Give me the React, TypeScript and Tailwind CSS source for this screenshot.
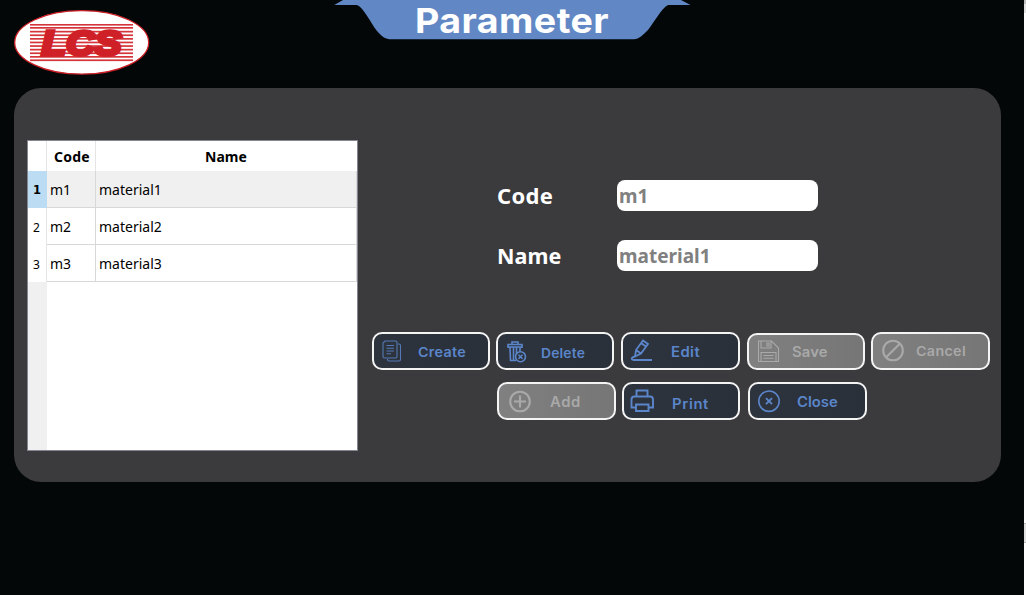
import type { ReactNode } from "react";

const rows = [
  { id: 1, code: "m1", name: "material1" },
  { id: 2, code: "m2", name: "material2" },
  { id: 3, code: "m3", name: "material3" },
];

function Logo() {
  const stripes = [27.8, 31.6, 35.2, 38.8, 42.4, 46, 49.6, 53.2, 56.8, 60.2];
  return (
    <svg className="ml-[14px] mt-[10px] h-[65px] w-[136px] shrink-0" viewBox="14 10 136 65">
      <ellipse cx="81.7" cy="42.4" rx="67" ry="31.7" fill="#fff" stroke="#cf2027" strokeWidth="1.3" />
      <g fill="#d5343a">
        <rect x="30" y="24" width="103" height="1.6" />
        {stripes.map((y) => (
          <rect key={y} x="30" y={y - 0.8} width="103" height="1.7" />
        ))}
      </g>
      <text
        x="41.5"
        y="54.6"
        fontFamily="Liberation Sans"
        fontWeight="700"
        fontStyle="italic"
        fontSize="35"
        textLength="80"
        lengthAdjust="spacingAndGlyphs"
        fill="#cf2027"
        stroke="#cf2027"
        strokeWidth="3.6"
      >
        LCS
      </text>
    </svg>
  );
}

function TitleBanner() {
  return (
    <div className="relative h-[40px] w-[357px] shrink-0">
      <svg className="absolute inset-0 h-full w-full" viewBox="334 0 357 40">
        <path
          d="M343 0 L334.3 5 H357 C364 8 370 22 377 31 C382 37 386 39.3 391 39.3 H634 C639 39 643 35 648 30 C655 21 661 9 668 5 H690.5 L681 0 Z"
          fill="#6188c5"
        />
      </svg>
      <h1 className="relative ml-[81px] mt-[-1px] origin-left scale-x-[1.09] whitespace-nowrap font-['Inter',sans-serif] text-[34.5px] font-bold leading-[43px] tracking-[0.4px] text-white">
        Parameter
      </h1>
    </div>
  );
}

function MaterialTable() {
  return (
    <div className="flex h-[311px] w-[331px] shrink-0 flex-col border border-[#828790] bg-white font-['Noto_Sans',sans-serif] text-[14px] text-black">
      <div className="flex h-[30px] shrink-0 font-bold leading-[31px]">
        <div className="w-[19px] border-r border-[#e5e5e5]" />
        <div className="w-[49px] border-r border-[#e5e5e5] pl-[7px] tracking-[0.2px]">Code</div>
        <div className="flex-1 pr-[1px] text-center tracking-[0.1px]">Name</div>
      </div>
      {rows.map((row) => (
        <div key={row.id} className="flex h-[37px] shrink-0 leading-[38px]">
          <div
            className={
              row.id === 1
                ? "w-[19px] bg-[#bcdcf4] pr-[1px] text-center font-['DejaVu_Sans',sans-serif] text-[11.5px] font-bold leading-[39px]"
                : "w-[19px] border-r border-[#e5e5e5] pr-[1px] text-center text-[12px] leading-[39px]"
            }
          >
            {row.id}
          </div>
          <div className={`h-full w-[49px] border-b border-r border-[#d8d8d8] pl-[3px] ${row.id === 1 ? "bg-[#f0f0f0]" : ""}`}>
            {row.code}
          </div>
          <div className={`h-full flex-1 border-b border-r border-[#d8d8d8] pl-[3px] ${row.id === 1 ? "bg-[#f0f0f0]" : ""}`}>
            {row.name}
          </div>
        </div>
      ))}
      <div className="w-[19px] flex-1 bg-[#f0f0f0]" />
    </div>
  );
}

function Field({ label, value, labelClass }: { label: string; value: string; labelClass: string }) {
  return (
    <label className="flex h-[31px] items-center">
      <span
        className={`w-[120px] font-['Noto_Sans',sans-serif] font-bold leading-[31px] text-white ${labelClass}`}
      >
        {label}
      </span>
      <input
        readOnly
        value={value}
        className="h-[31px] w-[201px] rounded-[8px] bg-white pl-[2px] font-['Noto_Sans',sans-serif] text-[19px] font-bold text-[#808080] outline-none"
      />
    </label>
  );
}

type ButtonProps = { label: string; textClass: string; className?: string; disabled?: boolean; children: ReactNode };

function ActionButton({ label, textClass, className = "", disabled = false, children }: ButtonProps) {
  const tone = disabled
    ? "bg-linear-to-r from-[#808080] to-[#767676] text-[#a9a9a9]"
    : "bg-linear-to-r from-[#2e343d] to-[#29303a] text-[#5b86cb]";
  return (
    <button
      disabled={disabled}
      className={`flex shrink-0 items-start rounded-[10px] border-2 border-[#f4f4f4] text-left font-['Inter',sans-serif] font-semibold ${tone} ${className}`}
    >
      <svg className="h-[34px] w-[36px] shrink-0" viewBox="0 0 36 34" fill="none" stroke="currentColor" strokeWidth="1.6">
        {children}
      </svg>
      <span className={`origin-left scale-x-[1.06] whitespace-nowrap ${textClass}`}>{label}</span>
    </button>
  );
}

export default function App() {
  return (
    <div className="flex h-[595px] w-[1026px] overflow-hidden bg-[#030708]">
      <main className="flex w-[1024px] flex-col">
        <header className="flex h-[88px] shrink-0 items-start">
          <Logo />
          <div className="w-[184px] shrink-0" />
          <TitleBanner />
        </header>
        <section className="ml-[14px] flex h-[394px] w-[987px] shrink-0 rounded-[27px] bg-[#3b3a3c] pl-[13px] pt-[52px]">
          <MaterialTable />
          <div className="ml-[14px] w-[618px] shrink-0">
            <div className="flex flex-col gap-[29px] pl-[125px] pt-[40px]">
              <Field label="Code" value="m1" labelClass="text-[22px] tracking-[0.3px]" />
              <Field label="Name" value="material1" labelClass="text-[21.5px] tracking-[0.1px]" />
            </div>
            <div className="mt-[61px] flex items-start">
              <ActionButton label="Create" className="h-[38px] w-[118px]" textClass="ml-[8px] text-[13.5px] leading-[36px] tracking-[0.3px]">
                <g strokeWidth="1.1" opacity="0.85">
                  <path d="M11 7 H21.5 Q23 7 23 8.5 V22.5 Q23 24 21.5 24 H10.5 Q9 24 9 22.5 V9 Z M24 10 H25 Q26.5 10 26.5 11.5 V25.5 Q26.5 27 25 27 H15 Q13.5 27 13.5 25.5 V25" />
                  <path d="M12.5 11.5 H20 M12.5 14.2 H20 M12.5 17 H20 M12.5 19.7 H17" />
                </g>
              </ActionButton>
              <ActionButton label="Delete" className="ml-[6px] h-[38px] w-[118px]" textClass="ml-[7px] text-[13px] leading-[38px] tracking-[0.2px]">
                <path d="M10 14 V10.5 H24 V14 M14 10 V8 H20 V10 M9.5 13 H24.5 M12 13.5 L12.5 26.5 H18 M22 13.5 V18 M15.5 13.5 V26 M18.5 13.5 V20" />
                <circle cx="22.5" cy="22.7" r="5" />
                <path d="M20.5 20.7 L24.5 24.7 M24.5 20.7 L20.5 24.7" />
              </ActionButton>
              <ActionButton label="Edit" className="ml-[7px] h-[38px] w-[119px]" textClass="ml-[12px] text-[14px] leading-[36px] tracking-[0.4px]">
                <path
                  d="M10 26 H29 M10 26 C7.5 25 9 23 12 22.5 L13 16 L20 6.5 L25 10 L18 19.5 L12 22.5 M13 16 L18 19.5 M18 9 L23 12.5"
                  strokeWidth="1.8"
                />
              </ActionButton>
              <ActionButton label="Save" disabled className="ml-[7px] mt-[1px] h-[37px] w-[118px]" textClass="ml-[7px] text-[14px] leading-[34px] tracking-[0.1px]">
                <g strokeWidth="1.1">
                  <path d="M9.5 6 H22.5 L29.5 13 V26.5 H9.5 Z M12 6 V13 H22 V6 M18 8 H20 V11 H18 Z M12 26.5 V17.5 H27 V26.5 M14.5 20.5 H24.5 M14.5 23.2 H24.5" />
                </g>
              </ActionButton>
              <ActionButton label="Cancel" disabled className="ml-[6px] h-[38px] w-[119px]" textClass="ml-[7px] text-[13.5px] leading-[34px] tracking-[0.3px]">
                <g strokeWidth="2.1">
                  <circle cx="20" cy="16.5" r="9.8" />
                  <path d="M13.2 23.3 L26.8 9.7" />
                </g>
              </ActionButton>
            </div>
            <div className="mt-[12px] flex items-start pl-[125px]">
              <ActionButton label="Add" disabled className="h-[38px] w-[119px]" textClass="ml-[15px] text-[14px] leading-[35px] tracking-[0.6px]">
                <g strokeWidth="2.1">
                  <circle cx="21" cy="17.5" r="9.8" />
                  <path d="M21 11.5 V23.5 M15 17.5 H27" />
                </g>
              </ActionButton>
              <ActionButton label="Print" className="ml-[6px] h-[38px] w-[118px]" textClass="ml-[12px] text-[14px] leading-[39px] tracking-[0.6px]">
                <g strokeWidth="1.9">
                  <path d="M12.5 12.5 V6.5 H23.5 V12.5 M11.5 23.5 H7.5 V15.5 Q7.5 12.5 10.5 12.5 H26 Q29 12.5 29 15.5 V23.5 H25 M12 20.5 H24.5 V27 H12 Z" />
                </g>
              </ActionButton>
              <ActionButton label="Close" className="ml-[8px] h-[38px] w-[119px]" textClass="ml-[11px] text-[14px] leading-[35px]">
                <circle cx="19" cy="17.2" r="10.2" />
                <path d="M16 14.2 L22 20.2 M22 14.2 L16 20.2" strokeWidth="1.9" />
              </ActionButton>
            </div>
          </div>
        </section>
      </main>
      <aside className="flex w-[2px] flex-col bg-white">
        <div className="h-[4px] bg-[#c0c0c0]" />
        <div className="h-[9px] bg-[#e2e2e2]" />
        <div className="mt-[510px] h-[20px] border-y border-[#bbbbbb] bg-[#e2e2e2]" />
      </aside>
    </div>
  );
}
